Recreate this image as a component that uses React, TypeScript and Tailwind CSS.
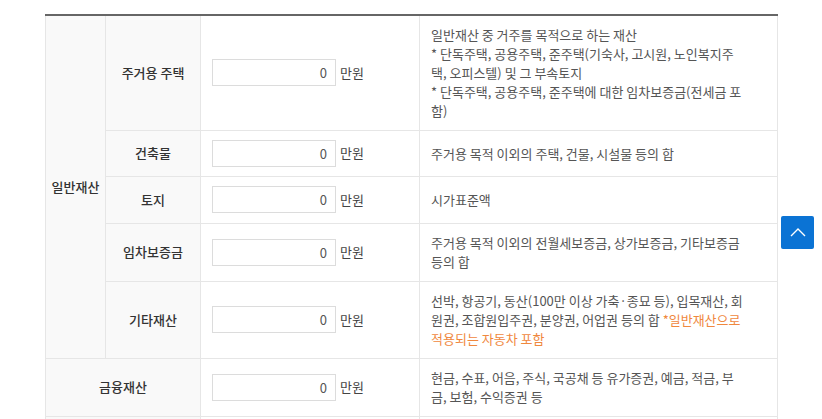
import { ReactNode } from "react";

const font = "font-['Noto_Sans_CJK_KR','Noto_Sans',sans-serif]";

function AmountInput() {
  return (
    <div className="flex items-center">
      <input
        type="text"
        defaultValue="0"
        className="w-[124px] h-[27px] border border-[#dcdcdc] bg-white px-2 text-right text-[13px] text-[#555] outline-none"
      />
      <span className="ml-[4px] text-[13px] text-[#444]">만원</span>
    </div>
  );
}

function Desc({ lines }: { lines: ReactNode[] }) {
  return (
    <td className="border border-[#e6e6e6] px-[11px] py-[9px] align-middle text-[13px] leading-[19px] text-[#555]">
      {lines.map((l, i) => (
        <div key={i} className="whitespace-nowrap">
          {l}
        </div>
      ))}
    </td>
  );
}

const labelCell =
  "border border-[#e6e6e6] bg-[#f9f9f9] text-center align-middle text-[13px] font-medium text-[#333]";
const inputCell = "border border-[#e6e6e6] pl-[11px] align-middle";

export default function App() {
  return (
    <div className={`relative w-[822px] h-[419px] overflow-hidden bg-white ${font}`}>
      <div className="pt-[14px] pl-[45px]">
        <table className="w-[732px] table-fixed border-collapse border-t-2 border-t-[#666]">
          <colgroup>
            <col className="w-[60px]" />
            <col className="w-[95px]" />
            <col className="w-[219px]" />
            <col className="w-[358px]" />
          </colgroup>
          <tbody>
            <tr className="h-[115px]">
              <td rowSpan={5} className={labelCell}>
                일반재산
              </td>
              <td className={labelCell}>주거용 주택</td>
              <td className={inputCell}>
                <AmountInput />
              </td>
              <Desc
                lines={[
                  "일반재산 중 거주를 목적으로 하는 재산",
                  "* 단독주택, 공용주택, 준주택(기숙사, 고시원, 노인복지주",
                  "택, 오피스텔) 및 그 부속토지",
                  "* 단독주택, 공용주택, 준주택에 대한 임차보증금(전세금 포",
                  "함)",
                ]}
              />
            </tr>
            <tr className="h-[46px]">
              <td className={labelCell}>건축물</td>
              <td className={inputCell}>
                <AmountInput />
              </td>
              <Desc lines={["주거용 목적 이외의 주택, 건물, 시설물 등의 합"]} />
            </tr>
            <tr className="h-[47px]">
              <td className={labelCell}>토지</td>
              <td className={inputCell}>
                <AmountInput />
              </td>
              <Desc lines={["시가표준액"]} />
            </tr>
            <tr className="h-[58px]">
              <td className={labelCell}>임차보증금</td>
              <td className={inputCell}>
                <AmountInput />
              </td>
              <Desc
                lines={[
                  "주거용 목적 이외의 전월세보증금, 상가보증금, 기타보증금",
                  "등의 합",
                ]}
              />
            </tr>
            <tr className="h-[77px]">
              <td className={labelCell}>기타재산</td>
              <td className={inputCell}>
                <AmountInput />
              </td>
              <Desc
                lines={[
                  "선박, 항공기, 동산(100만 이상 가축·종묘 등), 입목재산, 회",
                  <>
                    원권, 조합원입주권, 분양권, 어업권 등의 합{" "}
                    <span className="text-[#f0883e]">*일반재산으로</span>
                  </>,
                  <span className="text-[#f0883e]">적용되는 자동차 포함</span>,
                ]}
              />
            </tr>
            <tr className="h-[58px]">
              <td colSpan={2} className={labelCell}>
                금융재산
              </td>
              <td className={inputCell}>
                <AmountInput />
              </td>
              <Desc
                lines={[
                  "현금, 수표, 어음, 주식, 국공채 등 유가증권, 예금, 적금, 부",
                  "금, 보험, 수익증권 등",
                ]}
              />
            </tr>
            <tr className="h-[57px]">
              <td colSpan={2} className={labelCell}></td>
              <td className={inputCell}></td>
              <td className="border border-[#e6e6e6]"></td>
            </tr>
          </tbody>
        </table>
      </div>

      <button
        type="button"
        className="absolute left-[781px] top-[216px] flex h-[33px] w-[33px] items-center justify-center rounded-[2px] bg-[#0b73d4]"
      >
        <svg width="16" height="9" viewBox="0 0 16 9" fill="none">
          <polyline points="1,8 8,1 15,8" stroke="white" strokeWidth="1.4" />
        </svg>
      </button>
    </div>
  );
}
